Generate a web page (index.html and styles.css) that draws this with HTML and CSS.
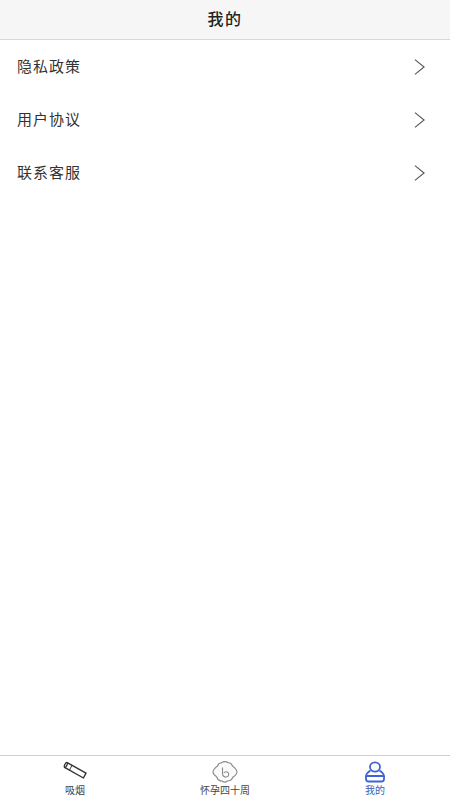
FILE: index.html
```html
<!DOCTYPE html>
<html lang="zh-CN">
<head>
    <meta charset="UTF-8">
    <meta name="viewport" content="width=device-width, initial-scale=1.0">
    <title>我的</title>
    <link rel="stylesheet" href="styles.css">
</head>
<body>

<div class="page">
    <div class="title-bar">我的</div>

    <div class="menu">
        <div class="menu-row">
            <span>隐私政策</span>
            <svg class="arrow" viewBox="0 0 12 18"><path d="M1 1 L11 9 L1 17"/></svg>
        </div>
        <div class="menu-row">
            <span>用户协议</span>
            <svg class="arrow" viewBox="0 0 12 18"><path d="M1 1 L11 9 L1 17"/></svg>
        </div>
        <div class="menu-row">
            <span>联系客服</span>
            <svg class="arrow" viewBox="0 0 12 18"><path d="M1 1 L11 9 L1 17"/></svg>
        </div>
    </div>

    <div class="tab-bar">
        <div class="tab">
            <svg class="tab-icon" viewBox="0 0 26 22">
                <g fill="none" stroke="#333" stroke-width="1.4" stroke-linejoin="round">
                    <path d="M5.2 1.6 L24 12.2 L21.4 17 L2.6 6.4 C1.6 5 3.8 1 5.2 1.6 Z"/>
                    <path d="M5.2 1.6 C6.2 2.4 4 7 2.6 6.4"/>
                    <path d="M10 4.4 L7.4 9.2" stroke-width="1"/>
                </g>
            </svg>
            <span>吸烟</span>
        </div>
        <div class="tab">
            <svg class="tab-icon" viewBox="0 0 26 22">
                <path d="M9.5 1.8 C11.5 0.4 14.5 0.4 16.5 1.8 C18.5 2 20 3.2 20.5 5 C22.5 6.5 25 8.8 25 11 C25 13.2 23 14.8 21 16 C20 18.5 18 20 15.5 20 C13.5 21.6 12 21.6 10 20 C7.5 20 5.5 18.5 4.8 16 C3 14.8 1 13.2 1 11 C1 8.8 3.5 6.5 5.5 5 C6 3.2 7.5 2 9.5 1.8 Z" fill="#fafafa" stroke="#8a8a8a" stroke-width="1.1"/>
                <path d="M10.5 6.5 V12.5 C10.5 15.5 13 16.5 15 15.8 C17.2 15 17.4 12 15.2 11 C14 10.5 12.6 10.8 11.8 12" fill="none" stroke="#8a8a8a" stroke-width="1.1"/>
            </svg>
            <span>怀孕四十周</span>
        </div>
        <div class="tab tab-active">
            <svg class="tab-icon" viewBox="0 0 26 22">
                <g fill="none" stroke="#3f63d8" stroke-width="1.8">
                    <ellipse cx="13" cy="6" rx="5" ry="4.6"/>
                    <path d="M8.5 9.5 C6 11 4.5 12.5 4 15 H22 C21.5 12.5 20 11 17.5 9.5"/>
                    <path d="M4 15 V18 C4 19.5 5 20.5 6.5 20.5 H19.5 C21 20.5 22 19.5 22 18 V15"/>
                </g>
            </svg>
            <span>我的</span>
        </div>
    </div>
</div>

</body>
</html>
```

FILE: styles.css
```css
body {
    margin: 0;
    font-family: "Noto Sans CJK SC", "Liberation Sans", sans-serif;
    background-color: #fff;
    color: #222;
}
.page {
    height: 800px;
    display: flex;
    flex-direction: column;
}
.title-bar {
    height: 39px;
    line-height: 37px;
    text-align: center;
    font-size: 16px;
    font-weight: 500;
    letter-spacing: 1.5px;
    background-color: #f6f6f6;
    border-bottom: 1px solid #d8d8d8;
}
.menu {
    flex: 1;
}
.menu-row {
    height: 53px;
    display: flex;
    align-items: center;
    justify-content: space-between;
    padding: 0 25px 0 17px;
    font-size: 15px;
    letter-spacing: 1px;
    color: #333;
}
.menu-row span {
    margin-bottom: 2px;
}
.arrow {
    width: 11px;
    height: 18px;
    fill: none;
    stroke: #555;
    stroke-width: 1.2;
}
.tab-bar {
    height: 44px;
    display: flex;
    border-top: 1px solid #cfcfcf;
}
.tab {
    flex: 1;
    display: flex;
    flex-direction: column;
    align-items: center;
    padding-top: 5px;
    font-size: 10px;
    line-height: 12px;
    color: #444;
}
.tab-icon {
    height: 22px;
    width: 26px;
    margin-bottom: 1px;
}
.tab-active {
    color: #3a5cb8;
}
```
